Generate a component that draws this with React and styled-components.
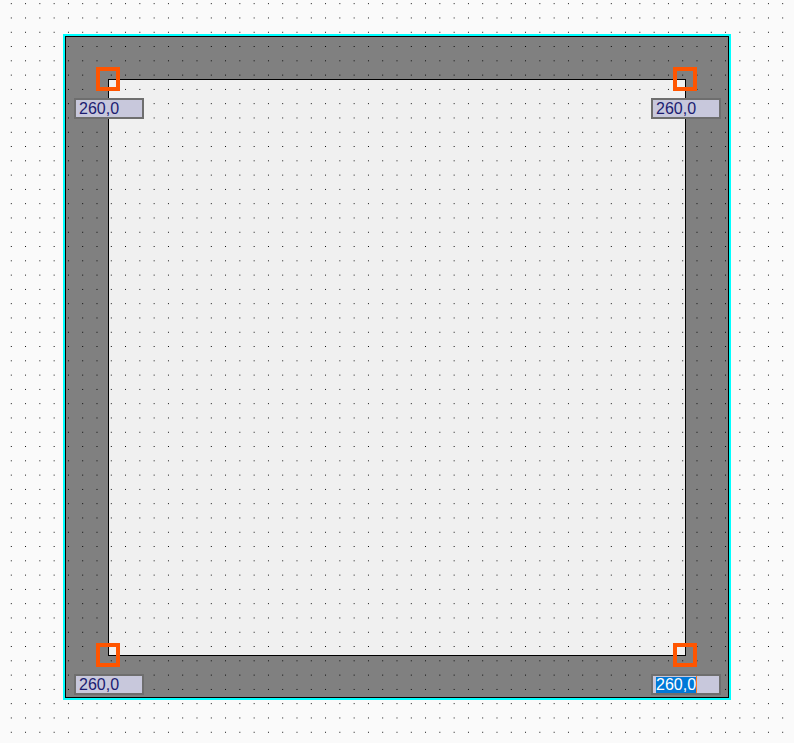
import React from 'react'
import styled, { createGlobalStyle } from 'styled-components'

const GlobalStyle = createGlobalStyle`
    html, body {
        margin: 0;
        padding: 0;
        background: #fafafa;
    }
    body {
        font-family: "Liberation Sans", Arial, sans-serif;
    }
`;

const Canvas = styled.div`
    position: relative;
    width: 794px;
    height: 743px;
    box-sizing: border-box;
    padding: 36px 0 0 65px;
    overflow: hidden;
`;

const Frame = styled.div`
    display: flex;
    box-sizing: border-box;
    width: 664px;
    height: 662px;
    padding: 42px 42px 41px;
    background: #808080;
    border: 1px solid #000;
    outline: 2px solid #00ffff;
`;

const Panel = styled.div`
    position: relative;
    flex: 1;
    background: #f0f0f0;
    border: 1px solid #000;
`;

const Handle = styled.div`
    position: absolute;
    z-index: 2;
    box-sizing: border-box;
    width: 24px;
    height: 24px;
    border: 4px solid #ff5500;
    ${p => p.$right ? 'right: -12px;' : 'left: -13px;'}
    ${p => p.$bottom ? 'bottom: -12px;' : 'top: -13px;'}
`;

const Coord = styled.div`
    position: absolute;
    z-index: 2;
    box-sizing: border-box;
    width: 70px;
    height: 21px;
    padding: 0 3px;
    background: #c8c8dc;
    border: 2px solid #6e6e6e;
    color: #1c1c72;
    font-size: 16px;
    line-height: 17px;
    white-space: nowrap;
    display: flex;
    align-items: center;
    ${p => p.$right ? 'right: -36px;' : 'left: -35px;'}
    ${p => p.$bottom ? 'bottom: -40px;' : 'top: 18px;'}
`;

const Selected = styled.span`
    display: inline-block;
    height: 16px;
    line-height: 16px;
    background: #0078d7;
    color: #fff;
`;

const Caret = styled.span`
    display: inline-block;
    width: 1px;
    height: 17px;
    background: #ff7a20;
`;

const GridOverlay = styled.svg`
    position: absolute;
    inset: 0;
    z-index: 1;
    pointer-events: none;
    shape-rendering: crispEdges;
`;

const corners = [
    { right: false, bottom: false, value: '260,0' },
    { right: true, bottom: false, value: '260,0' },
    { right: false, bottom: true, value: '260,0' },
    { right: true, bottom: true, value: '260,0', editing: true },
];

const App = () => {
    return (
        <>
            <GlobalStyle />
            <Canvas>
                <Frame>
                    <Panel>
                        {corners.map((c, i) => (
                            <React.Fragment key={i}>
                                <Handle $right={c.right} $bottom={c.bottom} />
                                <Coord $right={c.right} $bottom={c.bottom}>
                                    {c.editing
                                        ? <><Selected>{c.value}</Selected><Caret /></>
                                        : c.value}
                                </Coord>
                            </React.Fragment>
                        ))}
                    </Panel>
                </Frame>
                <GridOverlay width="794" height="743">
                    <defs>
                        <pattern id="dots" patternUnits="userSpaceOnUse" x="10.8" y="3.2" width="14.2857" height="14.2857">
                            <rect x="0" y="0" width="1.2" height="1.2" fill="#000" />
                        </pattern>
                    </defs>
                    <rect width="794" height="743" fill="url(#dots)" />
                </GridOverlay>
            </Canvas>
        </>
    )
}

export default App
